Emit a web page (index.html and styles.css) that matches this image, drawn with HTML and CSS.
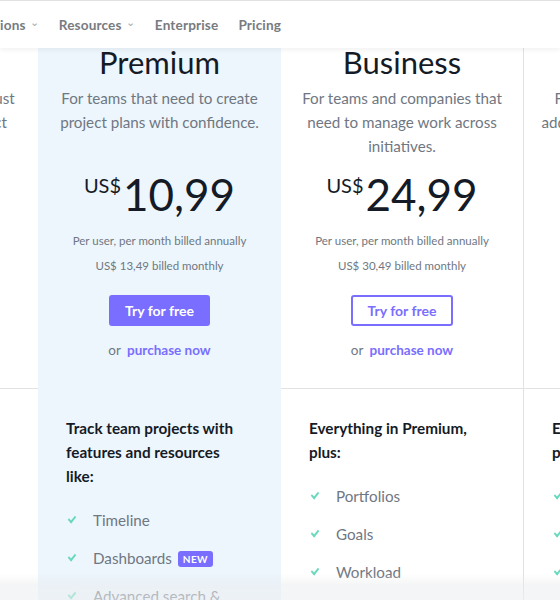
FILE: index.html
```html
<!DOCTYPE html>
<html lang="en">
<head>
<meta charset="utf-8">
<title>Pricing</title>
<link rel="stylesheet" href="styles.css">
</head>
<body>
<header class="nav">
  <div class="nav-items">
    <span class="nav-item">Solutions<span class="chev">&#8964;</span></span>
    <span class="nav-item">Resources<span class="chev">&#8964;</span></span>
    <span class="nav-item">Enterprise</span>
    <span class="nav-item">Pricing</span>
  </div>
</header>
<main class="plans">
  <section class="cell head">
    <h2 class="title">Basic</h2>
    <p class="desc">For individuals and teams just getting started with project management.</p>
  </section>
  <section class="cell head premium">
    <h2 class="title">Premium</h2>
    <p class="desc">For teams that need to create project plans with confidence.</p>
    <div class="price"><span class="cur">US$</span><span class="amt">10,99</span></div>
    <p class="note">Per user, per month billed annually</p>
    <p class="note">US$ 13,49 billed monthly</p>
    <a class="btn btn-fill">Try for free</a>
    <p class="or">or <a class="buy">purchase now</a></p>
  </section>
  <section class="cell head bordered">
    <h2 class="title">Business</h2>
    <p class="desc">For teams and companies that need to manage work across initiatives.</p>
    <div class="price"><span class="cur">US$</span><span class="amt">24,99</span></div>
    <p class="note">Per user, per month billed annually</p>
    <p class="note">US$ 30,49 billed monthly</p>
    <a class="btn btn-line">Try for free</a>
    <p class="or">or <a class="buy">purchase now</a></p>
  </section>
  <section class="cell head">
    <h2 class="title">Enterprise</h2>
    <p class="desc">For organizations that need additional security, control, and support.</p>
  </section>

  <section class="cell feats">
    <h3 class="fhead">Manage tasks for individual</h3>
  </section>
  <section class="cell feats premium">
    <h3 class="fhead">Track team projects with features and resources like:</h3>
    <ul class="list">
      <li><span class="chk"></span><span>Timeline</span></li>
      <li><span class="chk"></span><span>Dashboards <span class="badge">NEW</span></span></li>
      <li><span class="chk"></span><span>Advanced search &amp; reporting</span></li>
    </ul>
  </section>
  <section class="cell feats bordered">
    <h3 class="fhead">Everything in Premium, plus:</h3>
    <ul class="list">
      <li><span class="chk"></span><span>Portfolios</span></li>
      <li><span class="chk"></span><span>Goals</span></li>
      <li><span class="chk"></span><span>Workload</span></li>
      <li><span class="chk"></span><span>Custom rules builder</span></li>
    </ul>
  </section>
  <section class="cell feats">
    <h3 class="fhead">Everything in Business, plus:</h3>
    <ul class="list">
      <li><span class="chk"></span><span>SAML</span></li>
      <li><span class="chk"></span><span>Data export</span></li>
      <li><span class="chk"></span><span>Custom branding</span></li>
    </ul>
  </section>
</main>
<div class="fade"></div>
</body>
</html>
```
FILE: styles.css
```css
html, body {
  margin: 0;
  padding: 0;
  width: 560px;
  height: 600px;
  overflow: hidden;
  background: #ffffff;
  font-family: "Lato", "Noto Sans", sans-serif;
  color: #151b26;
}
.nav {
  position: relative;
  z-index: 2;
  height: 47px;
  background: #fff;
  border-top: 1px solid #e2e2e2;
  box-shadow: 0 2px 5px rgba(0, 0, 0, 0.06);
  display: flex;
  align-items: center;
}
.nav-items {
  display: flex;
  gap: 20px;
  margin-left: -32px;
  font-size: 13.6px;
  letter-spacing: 0.15px;
  font-weight: 700;
  color: #787b7f;
}
.nav-item {
  display: flex;
  align-items: center;
}
.chev {
  font-size: 11px;
  color: #a8acb0;
  margin-left: 4px;
  position: relative;
  top: -3px;
  font-weight: 400;
}
.plans {
  display: grid;
  grid-template-columns: repeat(4, 243px);
  margin-left: -205px;
  margin-top: -4px;
}
.cell {
  box-sizing: border-box;
}
.premium {
  background: #edf6fd;
}
.bordered {
  border-right: 1px solid #e2e2e2;
}
.head {
  text-align: center;
  padding: 0 16px 28px;
  border-bottom: 1px solid #e2e2e2;
}
.head.premium {
  border-bottom-color: transparent;
}
.title {
  margin: 0;
  font-size: 31px;
  line-height: 36px;
  font-weight: 400;
  color: #151b26;
}
.desc {
  margin: 6px 0 0;
  min-height: 72px;
  font-size: 15.2px;
  line-height: 24px;
  color: #6f7782;
}
.price {
  margin-top: 12px;
  display: flex;
  justify-content: center;
  align-items: flex-start;
  height: 48px;
}
.cur {
  font-size: 20px;
  line-height: 20px;
  margin-top: 5px;
  margin-right: 2px;
}
.amt {
  font-size: 44px;
  line-height: 48px;
}
.note {
  margin: 13px 0 0;
  font-size: 11.5px;
  line-height: 20px;
  color: #6f7782;
}
.note + .note {
  margin-top: 5px;
}
.btn {
  display: inline-block;
  box-sizing: border-box;
  margin-top: 19px;
  height: 31px;
  line-height: 27px;
  padding: 0 14px;
  border: 2px solid #796eff;
  border-radius: 3px;
  font-size: 14px;
  font-weight: 700;
}
.btn-fill {
  background: #796eff;
  color: #fff;
}
.btn-line {
  background: #fff;
  color: #796eff;
  padding: 0 15px;
}
.or {
  margin: 14px 0 0;
  font-size: 13.5px;
  line-height: 20px;
  color: #6f7782;
}
.buy {
  margin-left: 3px;
  color: #796eff;
  font-weight: 700;
}
.feats {
  padding: 27px 40px 0 28px;
}
.fhead {
  margin: 0;
  font-size: 15.3px;
  line-height: 24px;
  font-weight: 700;
  color: #151b26;
}
.list {
  list-style: none;
  margin: 13px 0 0;
  padding: 0;
}
.list li {
  display: flex;
  align-items: flex-start;
  padding: 7px 0;
  line-height: 24px;
  font-size: 15.2px;
  color: #6f7782;
}
.chk {
  width: 6px;
  height: 3px;
  border-left: 2px solid #6ad8bd;
  border-bottom: 2px solid #6ad8bd;
  transform: rotate(-50deg) skewX(-8deg);
  margin: 8px 17px 0 2px;
  flex: none;
}
.badge {
  margin-left: 2px;
  display: inline-block;
  vertical-align: 1px;
  background: #796eff;
  color: #fff;
  font-size: 10px;
  font-weight: 700;
  letter-spacing: 0.4px;
  line-height: 16px;
  padding: 0 5px;
  border-radius: 3px;
}
.fade {
  position: fixed;
  left: 0;
  right: 0;
  bottom: 0;
  height: 26px;
  background: linear-gradient(to bottom, rgba(230, 232, 234, 0) 0%, rgba(232, 234, 236, 0.45) 40%, rgba(236, 238, 240, 0.6) 100%);
  pointer-events: none;
}
```
